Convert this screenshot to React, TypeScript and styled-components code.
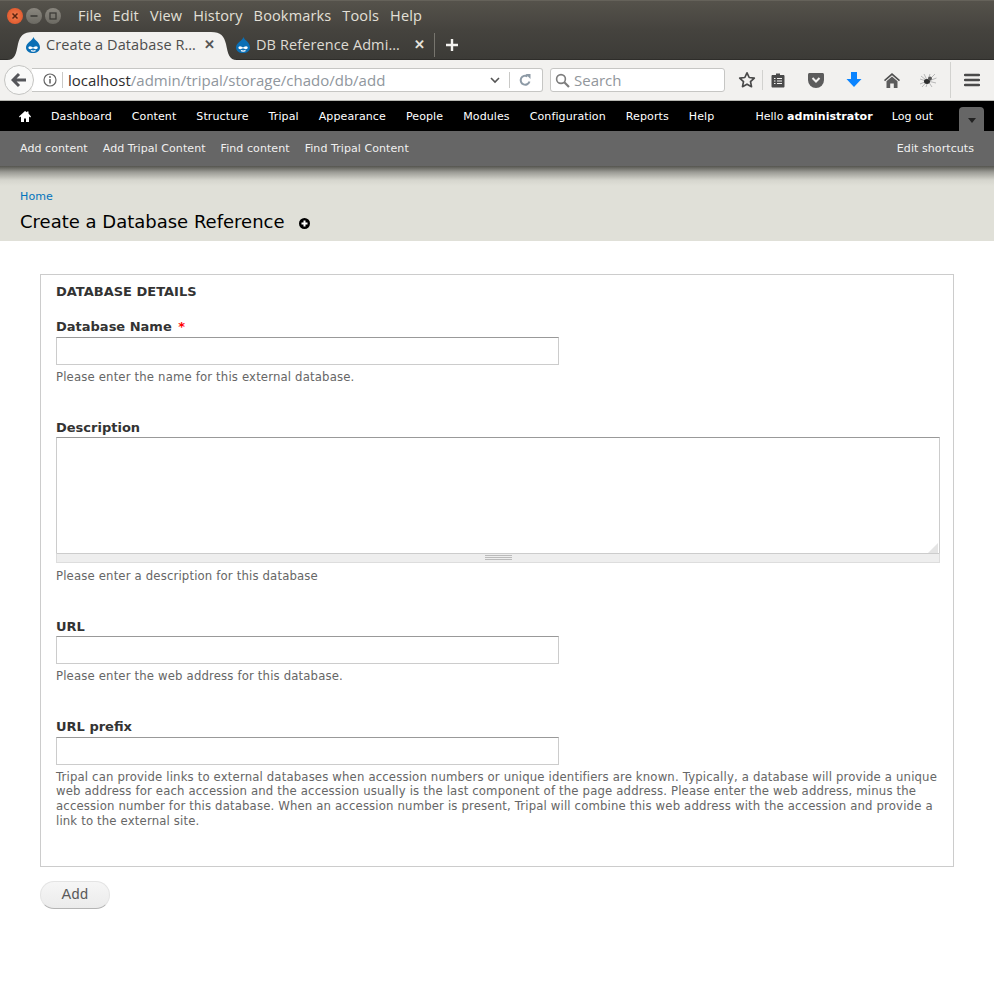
import React from 'react';
import styled, { createGlobalStyle } from 'styled-components';

const Global = createGlobalStyle`
  html, body { margin: 0; padding: 0; background: #fff; }
  body { font-family: "DejaVu Sans", sans-serif; }
`;

const Page = styled.div`
  width: 994px;
  height: 1001px;
  overflow: hidden;
  background: #fff;
`;

// 浏览器外壳
const TitleBar = styled.div`
  height: 30px;
  display: flex;
  align-items: center;
  padding-left: 7px;
  background: linear-gradient(#55524b, #45433e);
  border-top: 1px solid #65625a;
  box-sizing: border-box;
  font-family: "Open Sans", "Noto Sans", sans-serif;
`;

const WindowButtons = styled.div`
  display: flex;
  gap: 3px;
  margin-right: 17px;
`;

const WindowButton = styled.div<{ $close?: boolean }>`
  width: 16px;
  height: 16px;
  border-radius: 50%;
  background: ${(p) => (p.$close ? 'radial-gradient(#f08050, #dc4c22)' : 'linear-gradient(#8a877f, #6c6a63)')};
  display: flex;
  align-items: center;
  justify-content: center;
  svg { display: block; }
`;

const Menu = styled.div`
  display: flex;
  gap: 11px;
  color: #e3e0d8;
  font-size: 14.5px;
  letter-spacing: 0.15px;
`;

const TabBar = styled.div`
  height: 30px;
  display: flex;
  align-items: stretch;
  padding-left: 15px;
  background: linear-gradient(#45433e, #3c3b37);
  border-bottom: 1px solid #2e2d2a;
  box-sizing: border-box;
  font-family: "Open Sans", "Noto Sans", sans-serif;
  font-size: 14.5px;
  letter-spacing: 0.1px;
`;

const Tab = styled.div<{ $active?: boolean }>`
  position: relative;
  width: 210px;
  box-sizing: border-box;
  display: flex;
  align-items: center;
  gap: 5px;
  padding: 0 10px;
  color: ${(p) => (p.$active ? '#4d4d4d' : '#dedbd3')};
`;

const TabLabel = styled.span`
  flex: 1;
  position: relative;
  white-space: nowrap;
`;

const TabShape = styled.svg`
  position: absolute;
  left: -8px;
  top: 2px;
`;

const Favicon = styled.svg`
  position: relative;
  flex: none;
`;

const CloseMark = styled.b<{ $light?: boolean }>`
  flex: none;
  position: relative;
  font-size: 13px;
  line-height: 1;
  color: ${(p) => (p.$light ? '#e6e3dc' : '#555')};
`;

const NewTab = styled.div`
  margin-left: -1px;
  padding-left: 10px;
  height: 24px;
  align-self: center;
  border-left: 1px solid #77756e;
  display: flex;
  align-items: center;
`;

const NavBar = styled.div`
  height: 41px;
  display: flex;
  align-items: center;
  padding: 0 0 0 4px;
  background: #f2f1ef;
  border-bottom: 1px solid #b5b5b0;
  box-sizing: border-box;
  font-family: "Open Sans", "Noto Sans", sans-serif;
`;

const BackButton = styled.div`
  width: 30px;
  height: 30px;
  border-radius: 50%;
  border: 1px solid #c4c4c2;
  background: #f9f9f8;
  box-sizing: border-box;
  display: flex;
  align-items: center;
  justify-content: center;
  position: relative;
  z-index: 1;
  flex: none;
`;

const UrlBox = styled.div`
  width: 511px;
  height: 24px;
  margin-left: -2px;
  box-sizing: border-box;
  border: 1px solid #c6c6c4;
  border-left: none;
  border-radius: 0 3px 3px 0;
  background: #fff;
  display: flex;
  align-items: center;
  padding-left: 11px;
  font-size: 15px;
`;

const UrlIcon = styled.svg<{ $left?: number; $right?: number }>`
  flex: none;
  margin-left: ${(p) => p.$left ?? 0}px;
  margin-right: ${(p) => p.$right ?? 0}px;
`;

const UrlDivider = styled.i`
  width: 1px;
  height: 16px;
  background: #c9c9c7;
  flex: none;
`;

const UrlHost = styled.span`
  margin-left: 5px;
  color: #2e2e2e;
`;

const UrlPath = styled.span`
  color: #8f969d;
  flex: 1;
`;

const SearchBox = styled.div`
  width: 175px;
  height: 24px;
  margin-left: 7px;
  box-sizing: border-box;
  border: 1px solid #c6c6c4;
  border-radius: 3px;
  background: #fff;
  display: flex;
  align-items: center;
  gap: 4px;
  padding-left: 4px;
  color: #91969b;
  font-size: 15px;
`;

const ToolIcons = styled.div`
  display: flex;
  align-items: center;
  height: 36px;
  margin-left: 13px;
`;

const ToolIcon = styled.svg<{ $right?: number }>`
  display: block;
  flex: none;
  margin-right: ${(p) => p.$right ?? 0}px;
`;

const ToolDivider = styled.i<{ $tall?: boolean; $left: number; $right: number }>`
  width: 1px;
  height: ${(p) => (p.$tall ? '36px' : '20px')};
  margin: 0 ${(p) => p.$right}px 0 ${(p) => p.$left}px;
  background: #d2d2cf;
  flex: none;
`;

// Drupal 管理栏
const AdminBar = styled.div`
  height: 30px;
  background: #000;
  display: flex;
  align-items: center;
  padding-left: 19px;
  color: #fff;
  font-size: 11.05px;
  letter-spacing: 0.09px;
  position: relative;
`;

const HomeIcon = styled.svg`
  flex: none;
`;

const AdminLinks = styled.div`
  display: flex;
  align-items: center;
  gap: 20px;
  margin-left: 20px;
`;

const UserLinks = styled.div`
  display: flex;
  align-items: center;
  gap: 19px;
  margin-left: 41px;
  letter-spacing: 0.02px;
  b { font-weight: 700; }
`;

const ShortcutToggle = styled.div`
  position: absolute;
  left: 959px;
  top: 6px;
  width: 25px;
  height: 24px;
  border-radius: 4px 4px 0 0;
  background: #666;
  display: flex;
  align-items: center;
  justify-content: center;
  &::after {
    content: '';
    margin-top: 2px;
    border-style: solid;
    border-width: 5px 4.5px 0;
    border-color: #222 transparent transparent;
  }
`;

const ShortcutBar = styled.div`
  height: 35px;
  background: #666;
  display: flex;
  align-items: center;
  justify-content: space-between;
  padding: 0 20px;
  color: #f0f0f0;
  font-size: 11.05px;
  letter-spacing: 0.05px;
`;

const ShortcutLinks = styled.div`
  display: flex;
  gap: 15px;
`;

const PageHead = styled.div`
  height: 75px;
  box-sizing: border-box;
  padding: 24px 20px 0;
  background: linear-gradient(#55554f 0, #9a9a94 6px, #d5d5cd 14px, #e0e0d8 20px, #e0e0d8 100%);
`;

const Breadcrumb = styled.a`
  display: block;
  color: #0074bd;
  font-size: 11.05px;
  letter-spacing: 0.08px;
  line-height: 14px;
`;

const Title = styled.h1`
  margin: 4px 0 0;
  display: flex;
  align-items: center;
  gap: 14px;
  color: #000;
  font-size: 18px;
  font-weight: 400;
  line-height: 28px;
`;

const TitleIcon = styled.svg`
  margin-top: 2px;
`;

const Content = styled.div`
  padding: 33px 40px 0;
`;

const Fieldset = styled.div`
  height: 593px;
  box-sizing: border-box;
  border: 1px solid #ccc;
  padding: 9px 13px 0 15px;
`;

const Legend = styled.div`
  color: #333;
  font-size: 13px;
  line-height: 15px;
  font-weight: 700;
  margin-bottom: 20px;
`;

const Field = styled.div<{ $gap: number }>`
  margin-bottom: ${(p) => p.$gap}px;
`;

const Label = styled.label<{ $tight?: boolean }>`
  display: block;
  color: #333;
  font-size: 13px;
  line-height: 15px;
  font-weight: 700;
  margin-bottom: ${(p) => (p.$tight ? 2 : 3)}px;
  em { color: #f00; font-style: normal; margin-left: 2px; }
`;

const TextInput = styled.input`
  display: block;
  width: 503px;
  height: 28px;
  box-sizing: border-box;
  padding: 0;
  border: 1px solid #ccc;
  border-top-color: #999;
  border-radius: 0;
  background: #fff;
  outline: none;
`;

const TextArea = styled.div`
  width: 884px;
  height: 116px;
  box-sizing: border-box;
  border: 1px solid #ccc;
  border-top-color: #999;
  border-bottom: none;
  background: #fff;
  position: relative;
`;

const Corner = styled.svg`
  position: absolute;
  right: 1px;
  bottom: 0;
`;

const Grippie = styled.div`
  width: 884px;
  height: 10px;
  margin-bottom: 6px;
  box-sizing: border-box;
  border: 1px solid #ddd;
  border-top: 1px solid #ccc;
  background: #eee;
  display: flex;
  align-items: center;
  justify-content: center;
  &::after {
    content: '';
    width: 27px;
    height: 5px;
    border-top: 1px solid #bbb;
    border-bottom: 1px solid #bbb;
    background: linear-gradient(#eee 0 1px, #bbb 1px 2px, #eee 2px);
    background-size: 100% 3px;
    background-repeat: no-repeat;
    box-sizing: border-box;
  }
`;

const Help = styled.div`
  color: #666;
  font-size: 11.7px;
  letter-spacing: 0.155px;
  line-height: 14.6px;
  margin-top: 5px;
`;

const Submit = styled.button`
  display: block;
  margin-top: 14px;
  width: 70px;
  height: 28px;
  padding: 0 0 2px;
  border: 1px solid #e4e4e4;
  border-bottom-color: #b4b4b4;
  border-radius: 14px;
  background: linear-gradient(#f6f6f6, #ebebeb);
  color: #5a5a5a;
  font-family: "Liberation Sans", Arial, sans-serif;
  font-size: 14.5px;
  letter-spacing: 0.4px;
`;

function DrupalDrop() {
  return (
    <Favicon width="16" height="18" viewBox="0 0 16 18">
      <path d="M8.500 1 C9 4 15 6 15 11.500 C15 15 12 17 8 17 C4 17 1 15 1 11.500 C1 7 7 5 8.500 1 Z" fill="#0b6fb5" />
      <path d="M3.500 11 C5 9 7 11 8 11.500 C9 11 11 9 12.700 11 C13 13 11 13.500 10 13 L8 12.200 L6 13 C5 13.500 3 13 3.500 11 Z" fill="#fff" />
      <path d="M6 14.500 C7 15.300 9.500 15.300 10.500 14.500" stroke="#fff" strokeWidth="1.200" fill="none" />
    </Favicon>
  );
}

const adminLinks = ['Dashboard', 'Content', 'Structure', 'Tripal', 'Appearance', 'People', 'Modules', 'Configuration', 'Reports', 'Help'];
const shortcuts = ['Add content', 'Add Tripal Content', 'Find content', 'Find Tripal Content'];

function App() {
  return (
    <Page>
      <Global />

      {/* 标题栏 */}
      <TitleBar>
        <WindowButtons>
          <WindowButton $close>
            <svg width="8" height="8" viewBox="0 0 8 8"><path d="M1.500 1.500l5 5M6.500 1.500l-5 5" stroke="#5b2410" strokeWidth="1.500" /></svg>
          </WindowButton>
          <WindowButton>
            <svg width="8" height="8" viewBox="0 0 8 8"><path d="M0.500 4h7" stroke="#3c3b37" strokeWidth="1.600" /></svg>
          </WindowButton>
          <WindowButton>
            <svg width="8" height="8" viewBox="0 0 8 8"><rect x="1" y="1" width="6" height="6" fill="none" stroke="#3c3b37" strokeWidth="1.300" /></svg>
          </WindowButton>
        </WindowButtons>
        <Menu>
          <span>File</span>
          <span>Edit</span>
          <span>View</span>
          <span>History</span>
          <span>Bookmarks</span>
          <span>Tools</span>
          <span>Help</span>
        </Menu>
      </TitleBar>

      {/* 标签页 */}
      <TabBar>
        <Tab $active>
          <TabShape width="230" height="28" viewBox="0 0 230 28">
            <path d="M0 28 C8 28 9 22 11 12 C13 4 16 0 26 0 L204 0 C214 0 217 4 219 12 C221 22 222 28 230 28 Z" fill="#f2f1ef" />
          </TabShape>
          <DrupalDrop />
          <TabLabel>Create a Database R…</TabLabel>
          <CloseMark>✕</CloseMark>
        </Tab>
        <Tab>
          <DrupalDrop />
          <TabLabel>DB Reference Admi…</TabLabel>
          <CloseMark $light>✕</CloseMark>
        </Tab>
        <NewTab>
          <svg width="14" height="14" viewBox="0 0 14 14"><path d="M7 1v12M1 7h12" stroke="#f4f3f0" strokeWidth="2.400" /></svg>
        </NewTab>
      </TabBar>

      {/* 地址栏 */}
      <NavBar>
        <BackButton>
          <svg width="16" height="16" viewBox="0 0 16 16"><path d="M8 2L2 8l6 6M2.500 8H15" fill="none" stroke="#55565a" strokeWidth="3" /></svg>
        </BackButton>
        <UrlBox>
          <UrlIcon $right={5} width="14" height="14" viewBox="0 0 14 14">
            <circle cx="7" cy="7" r="6" fill="none" stroke="#666" strokeWidth="1.200" />
            <path d="M7 6v4.500" stroke="#666" strokeWidth="1.600" />
            <circle cx="7" cy="4" r="1" fill="#666" />
          </UrlIcon>
          <UrlDivider />
          <UrlHost>localhost</UrlHost>
          <UrlPath>/admin/tripal/storage/chado/db/add</UrlPath>
          <UrlIcon $right={9} width="10" height="7" viewBox="0 0 10 7"><path d="M1 1l4 4 4-4" fill="none" stroke="#555" strokeWidth="1.600" /></UrlIcon>
          <UrlDivider />
          <UrlIcon $left={8} $right={10} width="14" height="14" viewBox="0 0 14 14">
            <path d="M11.500 8.500A4.500 4.500 0 1 1 9.500 3.300" fill="none" stroke="#8d9aa6" strokeWidth="2" />
            <path d="M7.500 1h5v5z" fill="#8d9aa6" />
          </UrlIcon>
        </UrlBox>
        <SearchBox>
          <UrlIcon width="15" height="15" viewBox="0 0 15 15">
            <circle cx="6" cy="6" r="4.400" fill="none" stroke="#7d7d7d" strokeWidth="1.600" />
            <path d="M9.300 9.300L14 14" stroke="#7d7d7d" strokeWidth="2.200" />
          </UrlIcon>
          Search
        </SearchBox>
        <ToolIcons>
          <ToolIcon width="18" height="18" viewBox="0 0 18 18"><path d="M9 1.800l2.200 4.700 5.100.6-3.800 3.500 1 5.100L9 13.200l-4.500 2.500 1-5.100L1.700 7.100l5.100-.6z" fill="none" stroke="#4a4a4a" strokeWidth="1.700" strokeLinejoin="round" /></ToolIcon>
          <ToolDivider $left={6} $right={8} />
          <ToolIcon $right={23} width="14" height="16" viewBox="0 0 14 16">
            <path d="M1.500 3h3.500V1.500h4V3h3.500c.5 0 1 .5 1 1v10.500c0 .5-.5 1-1 1h-11c-.5 0-1-.5-1-1V4c0-.5.5-1 1-1z" fill="#4a4a4a" />
            <path d="M3 6.500h1.500M3 9h1.500M3 11.500h1.500M6 6.500h5M6 9h5M6 11.500h5" stroke="#f2f1ef" strokeWidth="1.200" />
          </ToolIcon>
          <ToolIcon $right={22} width="16" height="15" viewBox="0 0 16 15">
            <path d="M1.500 0h13c.8 0 1.500.7 1.500 1.500V7a8 8 0 0 1-16 0V1.500C0 .7.700 0 1.500 0z" fill="#5c5c5c" />
            <path d="M4.500 5L8 8.500 11.500 5" fill="none" stroke="#f2f1ef" strokeWidth="2" />
          </ToolIcon>
          <ToolIcon $right={22} width="16" height="16" viewBox="0 0 16 16">
            <path d="M5 0h6v7h4.500L8 15 .5 7H5z" fill="#0a84ff" />
          </ToolIcon>
          <ToolIcon $right={19} width="16" height="15" viewBox="0 0 16 15">
            <path d="M8 0L0 7l1 1.200L8 2.300l7 5.900L16 7z" fill="#4f4f4f" />
            <path d="M8 3.500L2.500 8.200V15h3.700v-4.500h3.600V15h3.700V8.200z" fill="#5c5c5c" />
          </ToolIcon>
          <ToolIcon width="18" height="15" viewBox="0 0 18 15">
            <path d="M1 6l6 2M1 11l6-2.500M3 14l4.500-5M5 1l3 6M11 1L9 6.500M16 1l-5 5M17.500 5L11 7.500M17 10l-6-1.500M13 14L10 9.500M7 14l1.500-4.500M2 3l5 4" stroke="#b8b8b8" strokeWidth="1" fill="none" />
            <ellipse cx="8" cy="8.500" rx="3" ry="2.400" fill="#2e2e2e" />
            <circle cx="11" cy="5.500" r="1.900" fill="#555" />
          </ToolIcon>
          <ToolDivider $tall $left={13} $right={13} />
          <ToolIcon width="16" height="14" viewBox="0 0 16 14">
            <path d="M1 2h14M1 7h14M1 12h14" stroke="#4a4a4a" strokeWidth="2.400" strokeLinecap="round" />
          </ToolIcon>
        </ToolIcons>
      </NavBar>

      {/* 管理菜单 */}
      <AdminBar>
        <HomeIcon width="12" height="11" viewBox="0 0 12 11">
          <path d="M6 0L0 5.500l.8.9L2 5.400V11h3V7.500h2V11h3V5.400l1.200 1 .8-.9L9.500 2.500V.5H8v.7L6 0z" fill="#fff" />
        </HomeIcon>
        <AdminLinks>
          {adminLinks.map((link) => (
            <span key={link}>{link}</span>
          ))}
        </AdminLinks>
        <UserLinks>
          <span>Hello <b>administrator</b></span>
          <span>Log out</span>
        </UserLinks>
        <ShortcutToggle />
      </AdminBar>
      <ShortcutBar>
        <ShortcutLinks>
          {shortcuts.map((link) => (
            <span key={link}>{link}</span>
          ))}
        </ShortcutLinks>
        <span>Edit shortcuts</span>
      </ShortcutBar>

      <PageHead>
        <Breadcrumb>Home</Breadcrumb>
        <Title>
          Create a Database Reference
          <TitleIcon width="11" height="11" viewBox="0 0 11 11">
            <circle cx="5.500" cy="5.500" r="5.500" fill="#000" />
            <path d="M5.500 2.500v6M2.500 5.500h6" stroke="#fff" strokeWidth="2" />
          </TitleIcon>
        </Title>
      </PageHead>

      {/* 表单 */}
      <Content>
        <Fieldset>
          <Legend>DATABASE DETAILS</Legend>
          <Field $gap={35}>
            <Label>Database Name <em>*</em></Label>
            <TextInput type="text" />
            <Help>Please enter the name for this external database.</Help>
          </Field>
          <Field $gap={36}>
            <Label $tight>Description</Label>
            <TextArea>
              <Corner width="10" height="10" viewBox="0 0 10 10">
                <path d="M10 0v10H0z" fill="#e4e4e4" />
              </Corner>
            </TextArea>
            <Grippie />
            <Help>Please enter a description for this database</Help>
          </Field>
          <Field $gap={35}>
            <Label $tight>URL</Label>
            <TextInput type="text" />
            <Help>Please enter the web address for this database.</Help>
          </Field>
          <Field $gap={0}>
            <Label>URL prefix</Label>
            <TextInput type="text" />
            <Help>
              Tripal can provide links to external databases when accession numbers or unique identifiers are known. Typically, a database will provide a unique web address for each accession and the accession usually is the last component of the page address. Please enter the web address, minus the accession number for this database. When an accession number is present, Tripal will combine this web address with the accession and provide a link to the external site.
            </Help>
          </Field>
        </Fieldset>
        <Submit>Add</Submit>
      </Content>
    </Page>
  );
}

export default App;
